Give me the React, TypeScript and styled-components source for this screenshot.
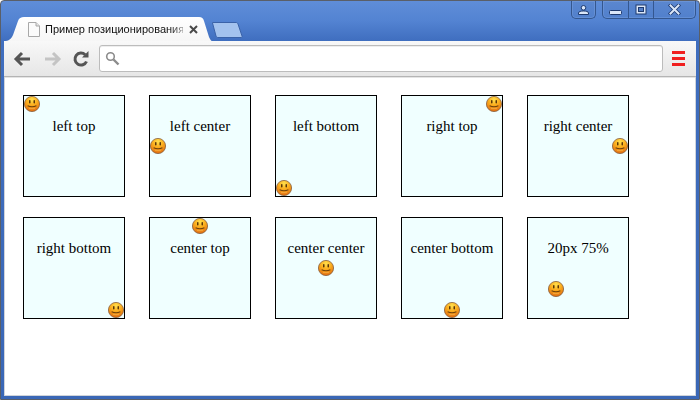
import React from "react";
import styled, { createGlobalStyle } from "styled-components";

const Global = createGlobalStyle`
  html, body { margin: 0; padding: 0; background: #fff; }
`;

const Win = styled.div`
  box-sizing: border-box;
  width: 700px;
  height: 400px;
  display: flex;
  flex-direction: column;
  overflow: hidden;
  border: 1px solid #5a5f68;
  border-radius: 4px 4px 0 0;
  background: linear-gradient(#5f8dd8 0, #5383d2 20px, #3f6ebf 40px, #3a67b6 100%);
  padding: 0 3px 3px 3px;
`;

const TitleBar = styled.div`
  height: 40px;
  flex: none;
  display: flex;
  justify-content: space-between;
  align-items: flex-start;
`;

const Tabs = styled.div`
  display: flex;
  align-items: flex-start;
  margin-top: 16px;
`;

const Tab = styled.div`
  width: 208px;
  height: 24px;
  box-sizing: border-box;
  padding: 0 0 0 24px;
  display: flex;
  align-items: center;
  gap: 5px;
  background: linear-gradient(#ffffff, #f6f6f6);
  clip-path: path("M0 24 C5 24 7 22 9 18 L14 4 C15 1 17 0 20 0 L195 0 C198 0 199 1 200 4 L205 20 C206 22 207 24 208 24 Z");
`;

const TabTitle = styled.span`
  width: 138px;
  white-space: nowrap;
  font: 11px/24px "Liberation Sans", Arial, sans-serif;
  color: #111;
  mask-image: linear-gradient(90deg, #000 90%, rgba(0, 0, 0, 0.4) 100%);
`;

const TabClose = styled.svg`
  width: 9px;
  height: 9px;
  margin-left: 1px;
  flex: none;
`;

const NewTab = styled.svg`
  width: 32px;
  height: 16px;
  margin: 5px 0 0 -1px;
  flex: none;
`;

const Controls = styled.div`
  display: flex;
  gap: 6px;
`;

const ControlGroup = styled.div`
  display: flex;
  height: 18px;
  box-sizing: border-box;
  border: 1px solid #34578f;
  border-top: none;
  border-radius: 0 0 5px 5px;
  box-shadow: inset 0 0 0 1px rgba(150, 185, 235, 0.25);
  background: linear-gradient(#5b87cf, #5180cc);
`;

const Control = styled.div<{ $w: number; $divider?: boolean }>`
  box-sizing: border-box;
  width: ${(p) => p.$w}px;
  display: flex;
  align-items: center;
  justify-content: center;
  border-left: ${(p) => (p.$divider ? "1px solid #34578f" : "none")};
`;

const Body = styled.div`
  flex: 1;
  display: flex;
  flex-direction: column;
  background: #fff;
  min-height: 0;
`;

const Toolbar = styled.div`
  height: 36px;
  flex: none;
  box-sizing: border-box;
  display: flex;
  align-items: center;
  padding: 0 11px 0 9px;
  background: linear-gradient(#f8f8f8, #e6e6e6);
  border-bottom: 1px solid #b4b4b4;
  box-shadow: 0 1px 0 #e4e4e4;
`;

const NavIcon = styled.svg`
  width: 20px;
  height: 20px;
  flex: none;
  margin-right: 9px;
`;

const Omnibox = styled.div`
  flex: 1;
  height: 27px;
  box-sizing: border-box;
  margin: 0 9px 0 0;
  display: flex;
  align-items: center;
  padding-left: 5px;
  background: #fff;
  border: 1px solid #bcbcbc;
  border-radius: 3px;
  box-shadow: inset 0 1px 0 #eee;
`;

const Menu = styled.div`
  width: 13px;
  display: flex;
  flex-direction: column;
  gap: 3px;
  flex: none;
`;

const MenuBar = styled.div`
  height: 3px;
  background: #f01f1f;
`;

const Page = styled.div`
  flex: 1;
  padding: 18px 0 0 19px;
  display: grid;
  grid-template-columns: repeat(5, 102px);
  grid-auto-rows: 102px;
  gap: 20px 24px;
  align-content: start;
  box-shadow: inset 1px 0 0 #d0d4da, inset -1px -1px 0 #d0d4da;
`;

const Box = styled.div`
  box-sizing: border-box;
  position: relative;
  border: 1px solid #000;
  background: #f0ffff;
  padding-top: 22px;
  text-align: center;
  font: 15px/17px "Liberation Serif", "Times New Roman", serif;
  color: #000;
`;

const SmileySvg = styled.svg<{ $x: number; $y: number }>`
  position: absolute;
  left: ${(p) => p.$x}px;
  top: ${(p) => p.$y}px;
  width: 16px;
  height: 16px;
`;

const Smiley = ({ x, y }: { x: number; y: number }) => (
  <SmileySvg $x={x} $y={y} viewBox="0 0 16 16">
    <defs>
      <radialGradient id="face" cx="50%" cy="22%" r="78%">
        <stop offset="0" stopColor="#ffe04e" />
        <stop offset="0.45" stopColor="#fbae1e" />
        <stop offset="1" stopColor="#e06a10" />
      </radialGradient>
    </defs>
    <circle cx="8" cy="8" r="7.6" fill="url(#face)" stroke="#86603e" strokeWidth="0.8" />
    <rect x="5" y="4" width="1.5" height="3.6" rx="0.75" fill="#5a3608" />
    <rect x="9.5" y="4" width="1.5" height="3.6" rx="0.75" fill="#5a3608" />
    <path d="M3.6 9.8 Q8 11.8 12.4 9.8" fill="none" stroke="#6a3f0a" strokeWidth="1.1" />
    <path d="M5 12.6 H11" stroke="#ffd070" strokeWidth="0.8" opacity="0.5" />
  </SmileySvg>
);

const items: [string, number, number][] = [
  ["left top", 0, 0],
  ["left center", 0, 42],
  ["left bottom", 0, 84],
  ["right top", 84, 0],
  ["right center", 84, 42],
  ["right bottom", 84, 84],
  ["center top", 42, 0],
  ["center center", 42, 42],
  ["center bottom", 42, 84],
  ["20px 75%", 20, 63],
];

export default function App() {
  return (
    <>
      <Global />
      <Win>
        <TitleBar>
          <Tabs>
            <Tab>
              <svg width="12" height="15" viewBox="0 0 12 15" style={{ flex: "none" }}>
                <path d="M.5.5 H8 L11.5 4 V14.5 H.5 Z" fill="#fbfbfb" stroke="#a8a8a8" />
                <path d="M8 .5 V4 H11.5" fill="#e4e4e4" stroke="#a8a8a8" />
              </svg>
              <TabTitle>Пример позиционирования</TabTitle>
              <TabClose viewBox="0 0 9 9">
                <path d="M1 1 L8 8 M8 1 L1 8" stroke="#4a4a4a" strokeWidth="2" />
              </TabClose>
            </Tab>
            <NewTab viewBox="0 0 32 16">
              <path
                d="M1.5 1 C1 .8 1 .5 2 .5 H25 C26 .5 26.5 1 27 2 L31 14 C31.3 15 31 15.5 30 15.5 H7 C6 15.5 5.6 15 5 14 Z"
                fill="#a3c2ee"
                stroke="#3a62a8"
              />
            </NewTab>
          </Tabs>
          <Controls>
            <ControlGroup>
              <Control $w={23}>
                <svg width="11" height="10" viewBox="0 0 11 10">
                  <circle cx="5.5" cy="2.8" r="2.3" fill="#dbe7f8" stroke="#1f3a6e" />
                  <path d="M.5 9.5 V8 C.5 6.5 3 6 5.5 6 C8 6 10.5 6.5 10.5 8 V9.5 Z" fill="#dbe7f8" stroke="#1f3a6e" />
                </svg>
              </Control>
            </ControlGroup>
            <ControlGroup>
              <Control $w={25}>
                <svg width="13" height="6" viewBox="0 0 13 6" style={{ marginTop: 6 }}>
                  <rect x=".5" y=".5" width="12" height="4" rx="1" fill="#dbe7f8" stroke="#1f3a6e" />
                </svg>
              </Control>
              <Control $w={25} $divider>
                <svg width="12" height="11" viewBox="0 0 12 11">
                  <rect x=".5" y=".5" width="11" height="10" fill="#1f3a6e" />
                  <rect x="1.5" y="1.5" width="9" height="8" fill="#dbe7f8" />
                  <rect x="3.5" y="3.5" width="5" height="4" fill="#5580c8" stroke="#1f3a6e" />
                </svg>
              </Control>
              <Control $w={42} $divider>
                <svg width="13" height="11" viewBox="0 0 13 11">
                  <path d="M2.5 1.5 L10.5 9.5 M10.5 1.5 L2.5 9.5" stroke="#1f3a6e" strokeWidth="3.6" strokeLinecap="square" />
                  <path d="M2.5 1.5 L10.5 9.5 M10.5 1.5 L2.5 9.5" stroke="#dbe7f8" strokeWidth="2" strokeLinecap="square" />
                </svg>
              </Control>
            </ControlGroup>
          </Controls>
        </TitleBar>
        <Body>
          <Toolbar>
            <NavIcon viewBox="0 0 20 20">
              <path d="M9 4 L3 10 L9 16 M3.5 10 H17" fill="none" stroke="#555" strokeWidth="3" />
            </NavIcon>
            <NavIcon viewBox="0 0 20 20">
              <path d="M11 4 L17 10 L11 16 M16.5 10 H3" fill="none" stroke="#c4c4c4" strokeWidth="3" />
            </NavIcon>
            <NavIcon viewBox="0 0 20 20" style={{ marginRight: 8 }}>
              <path d="M15.5 12.5 A6 6 0 1 1 14.2 5.8" fill="none" stroke="#555" strokeWidth="3" />
              <path d="M11 8.5 L17.5 8.5 L17.5 2 Z" fill="#555" />
            </NavIcon>
            <Omnibox>
              <svg width="15" height="15" viewBox="0 0 15 15">
                <circle cx="5.5" cy="5.5" r="3.8" fill="#fff" stroke="#8c8c8c" strokeWidth="1.6" />
                <path d="M8.5 8.5 L13.5 13.5" stroke="#8c8c8c" strokeWidth="2.4" />
              </svg>
            </Omnibox>
            <Menu>
              <MenuBar />
              <MenuBar />
              <MenuBar />
            </Menu>
          </Toolbar>
          <Page>
            {items.map(([label, x, y]) => (
              <Box key={label}>
                {label}
                <Smiley x={x} y={y} />
              </Box>
            ))}
          </Page>
        </Body>
      </Win>
    </>
  );
}
